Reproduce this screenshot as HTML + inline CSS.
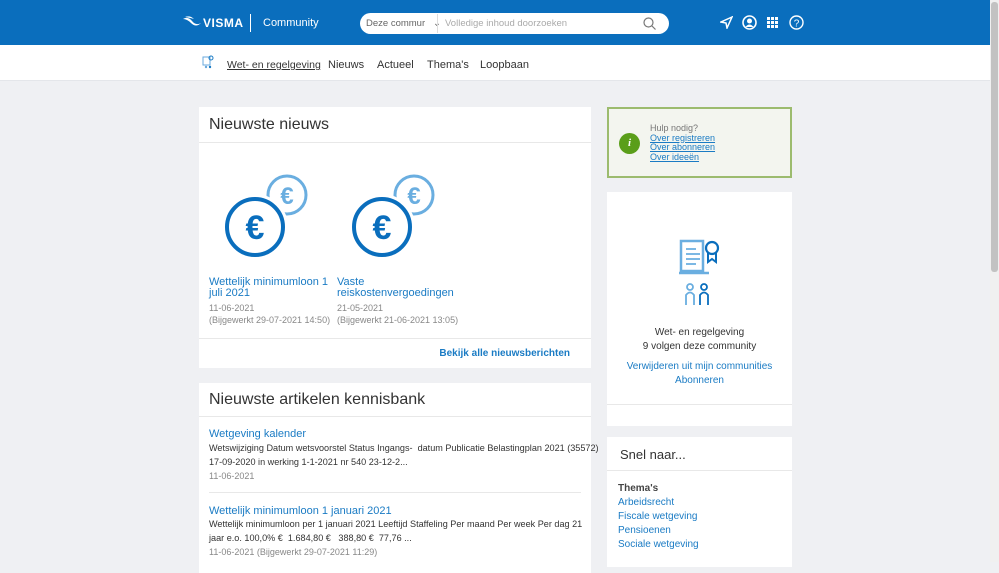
<!DOCTYPE html>
<html><head><meta charset="utf-8"><style>
*{box-sizing:border-box;margin:0;padding:0}
body{width:999px;height:562px;overflow:hidden;background:#eff0f3;font-family:"Liberation Sans",sans-serif;position:relative;color:#333}
.hdr{position:absolute;left:0;top:0;width:990px;height:45px;background:#0a6ebd}
.nav{position:absolute;left:0;top:45px;width:990px;height:36px;background:#fff;border-bottom:1px solid #e4e6ea}
.nav div{position:absolute;top:14px;font-size:11px;white-space:nowrap}
.sb{position:absolute;right:0;top:0;width:9px;height:562px;background:#f0f0f0}
.sb div{position:absolute;left:1px;top:2px;width:7px;height:270px;background:#c2c2c2;border-radius:3px}
.card{position:absolute;background:#fff}
.a{color:#1a7bc4}
.gray{color:#888;font-size:10px;white-space:nowrap}
.ct{font-size:16px;color:#333;position:absolute;left:10px;white-space:nowrap}
.hr{position:absolute;left:0;right:0;height:1px;background:#e8e8e8}
.lnk{color:#1a7bc4;text-decoration:underline;display:block}
</style></head><body>
<div class="hdr">
 <svg style="position:absolute;left:182px;top:16px" width="20" height="12" viewBox="0 0 20 12"><path d="M1 3 Q6 0 10 5 Q14 10 19 7 Q14 12 9 7 Q5 3 1 3Z" fill="#fff"/><path d="M3 1 Q8 -1 12 3 Q9 2 3 1Z" fill="#fff"/></svg>
 <div style="position:absolute;left:203px;top:16px;color:#fff;font-weight:bold;font-size:12px;letter-spacing:0.5px">VISMA</div>
 <div style="position:absolute;left:250px;top:14px;width:1px;height:18px;background:#fff"></div>
 <div style="position:absolute;left:263px;top:17px;color:#fff;font-size:11px">Community</div>
 <div style="position:absolute;left:360px;top:13px;width:309px;height:21px;background:#fff;border-radius:11px"></div>
 <div style="position:absolute;left:366px;top:18px;font-size:9.5px;color:#666;white-space:nowrap">Deze commur &nbsp;&nbsp;⌄</div>
 <div style="position:absolute;left:437px;top:14px;width:1px;height:19px;background:#ddd"></div>
 <div style="position:absolute;left:445px;top:18px;font-size:9.5px;color:#aaa">Volledige inhoud doorzoeken</div>
 <svg style="position:absolute;left:643px;top:17px" width="13" height="13"><circle cx="5.5" cy="5.5" r="4.5" fill="none" stroke="#777" stroke-width="1.2"/><path d="M9 9l3.5 3.5" stroke="#777" stroke-width="1.2"/></svg>
 <svg style="position:absolute;left:720px;top:16px" width="13" height="13"><path d="M12 1L1 6l5 1 1 5z" fill="none" stroke="#fff" stroke-width="1.5"/></svg>
 <svg style="position:absolute;left:742px;top:15px" width="15" height="15"><circle cx="7.5" cy="7.5" r="6.5" fill="none" stroke="#fff" stroke-width="1.6"/><circle cx="7.5" cy="6" r="2.5" fill="#fff"/><path d="M3.5 12 Q7.5 7 11.5 12" fill="#fff"/></svg>
 <svg style="position:absolute;left:767px;top:17px" width="11" height="11" fill="#fff"><rect x="0" y="0" width="3" height="3"/><rect x="4" y="0" width="3" height="3"/><rect x="8" y="0" width="3" height="3"/><rect x="0" y="4" width="3" height="3"/><rect x="4" y="4" width="3" height="3"/><rect x="8" y="4" width="3" height="3"/><rect x="0" y="8" width="3" height="3"/><rect x="4" y="8" width="3" height="3"/><rect x="8" y="8" width="3" height="3"/></svg>
 <svg style="position:absolute;left:789px;top:15px" width="15" height="15"><circle cx="7.5" cy="7.5" r="6.5" fill="none" stroke="#fff" stroke-width="1.4"/><text x="7.5" y="11.5" font-size="10" fill="#fff" text-anchor="middle" font-family="Liberation Sans">?</text></svg>
</div>
<div class="nav">
 <svg style="position:absolute;left:202px;top:10px" width="12" height="16"><rect x="1" y="2" width="7" height="8" fill="none" stroke="#6aa9dd"/><circle cx="9" cy="3" r="2" fill="none" stroke="#1a7bc4"/><circle cx="4" cy="12" r="1.2" fill="#6aa9dd"/><circle cx="8" cy="12" r="1.2" fill="#1a7bc4"/></svg>
 <div style="left:227px;text-decoration:underline;font-size:10.5px">Wet- en regelgeving</div>
 <div style="left:328px">Nieuws</div>
 <div style="left:377px">Actueel</div>
 <div style="left:427px">Thema's</div>
 <div style="left:480px">Loopbaan</div>
</div>

<div class="card" style="left:199px;top:107px;width:392px;height:261px">
 <div class="ct" style="top:9px">Nieuwste nieuws</div>
 <div class="hr" style="top:35px"></div>
 <svg style="position:absolute;left:26px;top:66px" width="86" height="86" viewBox="0 0 86 86"><circle cx="62" cy="22" r="19" fill="none" stroke="#6aaee0" stroke-width="3"/><text x="62" y="31" font-size="24" fill="#6aaee0" text-anchor="middle" font-family="Liberation Sans" font-weight="bold">€</text><circle cx="30" cy="54" r="29" fill="#fff" stroke="#fff" stroke-width="8"/><circle cx="30" cy="54" r="28" fill="none" stroke="#0a6ebd" stroke-width="4"/><text x="30" y="66" font-size="34" fill="#0a6ebd" text-anchor="middle" font-family="Liberation Sans" font-weight="bold">€</text></svg>
 <svg style="position:absolute;left:153px;top:66px" width="86" height="86" viewBox="0 0 86 86"><circle cx="62" cy="22" r="19" fill="none" stroke="#6aaee0" stroke-width="3"/><text x="62" y="31" font-size="24" fill="#6aaee0" text-anchor="middle" font-family="Liberation Sans" font-weight="bold">€</text><circle cx="30" cy="54" r="29" fill="#fff" stroke="#fff" stroke-width="8"/><circle cx="30" cy="54" r="28" fill="none" stroke="#0a6ebd" stroke-width="4"/><text x="30" y="66" font-size="34" fill="#0a6ebd" text-anchor="middle" font-family="Liberation Sans" font-weight="bold">€</text></svg>
 <div class="a" style="position:absolute;left:10px;top:170px;font-size:11px;line-height:11px;white-space:nowrap">Wettelijk minimumloon 1<br>juli 2021</div>
 <div class="gray" style="position:absolute;left:10px;top:195px;line-height:12px;font-size:9px">11-06-2021<br>(Bijgewerkt 29-07-2021 14:50)</div>
 <div class="a" style="position:absolute;left:138px;top:170px;font-size:11px;line-height:11px;white-space:nowrap">Vaste<br>reiskostenvergoedingen</div>
 <div class="gray" style="position:absolute;left:138px;top:195px;line-height:12px;font-size:9px">21-05-2021<br>(Bijgewerkt 21-06-2021 13:05)</div>
 <div class="hr" style="top:231px"></div>
 <div class="a" style="position:absolute;right:21px;top:241px;font-size:10px;font-weight:bold">Bekijk alle nieuwsberichten</div>
</div>

<div class="card" style="left:199px;top:383px;width:392px;height:190px">
 <div class="ct" style="top:8px">Nieuwste artikelen kennisbank</div>
 <div class="hr" style="top:33px"></div>
 <div class="a" style="position:absolute;left:10px;top:45px;font-size:11px">Wetgeving kalender</div>
 <div style="position:absolute;left:10px;top:58px;font-size:9.1px;line-height:14px;white-space:nowrap;color:#333">Wetswijziging Datum wetsvoorstel Status Ingangs- &nbsp;datum Publicatie Belastingplan 2021 (35572)<br>17-09-2020 in werking 1-1-2021 nr 540 23-12-2...</div>
 <div class="gray" style="position:absolute;left:10px;top:88px;font-size:9px">11-06-2021</div>
 <div class="hr" style="top:109px;left:10px;right:10px"></div>
 <div class="a" style="position:absolute;left:10px;top:122px;font-size:11px">Wettelijk minimumloon 1 januari 2021</div>
 <div style="position:absolute;left:10px;top:134px;font-size:9.1px;line-height:14px;white-space:nowrap;color:#333">Wettelijk minimumloon per 1 januari 2021 Leeftijd Staffeling Per maand Per week Per dag 21<br>jaar e.o. 100,0% € &nbsp;1.684,80 € &nbsp;&nbsp;388,80 € &nbsp;77,76 ...</div>
 <div class="gray" style="position:absolute;left:10px;top:164px;font-size:9px">11-06-2021 (Bijgewerkt 29-07-2021 11:29)</div>
</div>

<div style="position:absolute;left:607px;top:107px;width:185px;height:71px;background:#f3f5ef;border:2px solid #9cbb6e">
 <div style="position:absolute;left:10px;top:24px;width:21px;height:21px;border-radius:50%;background:#5a9e1a;color:#fff;font-size:11px;font-weight:bold;text-align:center;line-height:21px;font-family:'Liberation Serif',serif;font-style:italic">i</div>
 <div style="position:absolute;left:41px;top:15px;font-size:9px;color:#777;line-height:9.5px;white-space:nowrap">Hulp nodig?<span class="lnk">Over registreren</span><span class="lnk">Over abonneren</span><span class="lnk">Over ideeën</span></div>
</div>

<div class="card" style="left:607px;top:192px;width:185px;height:234px">
 <svg style="position:absolute;left:71px;top:47px" width="45" height="72" viewBox="0 0 45 72"><path d="M3 2h22v30H3z M1 34h30" fill="none" stroke="#6aaee0" stroke-width="2.5"/><path d="M8 10h10M8 15h14M8 20h14M8 25h10" stroke="#6aaee0" stroke-width="1.8"/><circle cx="34" cy="9" r="6" fill="none" stroke="#0a6ebd" stroke-width="2.2"/><path d="M30 14v9l4-3 4 3v-9" fill="none" stroke="#0a6ebd" stroke-width="2"/><circle cx="12" cy="48" r="3" fill="none" stroke="#6aaee0" stroke-width="1.8"/><path d="M8 66V56q4-5 8 0v10" fill="none" stroke="#6aaee0" stroke-width="1.8"/><circle cx="26" cy="48" r="3" fill="none" stroke="#0a6ebd" stroke-width="1.8"/><path d="M22 66V56q4-5 8 0v10" fill="none" stroke="#0a6ebd" stroke-width="1.8"/></svg>
 <div style="position:absolute;left:0;right:0;top:134px;text-align:center;font-size:10px;line-height:14px;color:#333">Wet- en regelgeving<br>9 volgen deze community</div>
 <div class="a" style="position:absolute;left:0;right:0;top:168px;text-align:center;font-size:10px;line-height:14px">Verwijderen uit mijn communities<br>Abonneren</div>
 <div class="hr" style="top:212px"></div>
</div>

<div class="card" style="left:607px;top:437px;width:185px;height:130px">
 <div style="position:absolute;left:13px;top:10px;font-size:13px;color:#333">Snel naar...</div>
 <div class="hr" style="top:33px"></div>
 <div style="position:absolute;left:11px;top:45px;font-size:10px;line-height:14px"><b style="color:#444">Thema's</b><br><span class="a">Arbeidsrecht<br>Fiscale wetgeving<br>Pensioenen<br>Sociale wetgeving</span></div>
</div>
<div class="sb"><div></div></div>
</body></html>
